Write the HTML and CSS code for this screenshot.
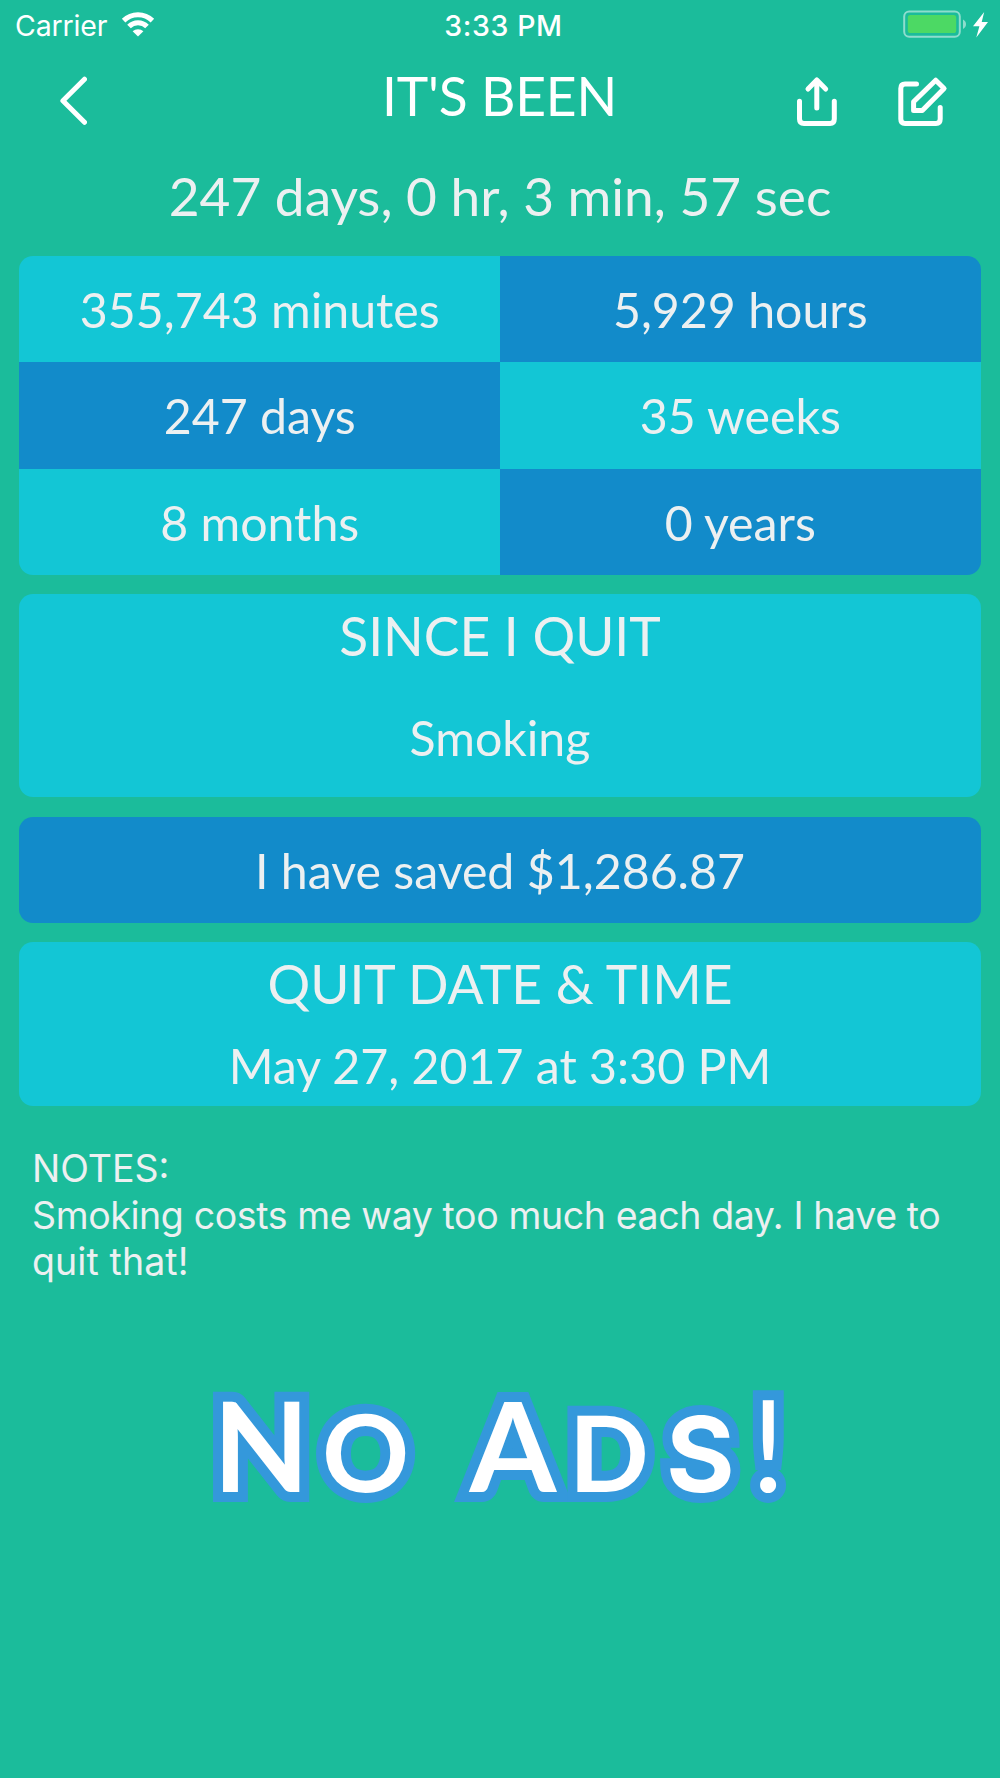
FILE: index.html
```html
<!DOCTYPE html>
<html lang="en">

<head>
    <meta charset="utf-8">
    <title>It's Been</title>
    <link rel="stylesheet" href="styles.css">
</head>

<body>

    <div class="status-bar">
        <div class="carrier">
            <span>Carrier</span>
            <svg class="wifi" width="34" height="25" viewBox="121 12 34 25">
                <path class="wifi-arc" d="M123.6 20.6a20.5 20.5 0 0 1 28.8 0M129 26.6a12.6 12.6 0 0 1 18 0" />
                <path fill="#fff" d="M132.6 31.3a7.8 7.8 0 0 1 10.8 0L138 36.5z" />
            </svg>
        </div>
        <div class="clock">3:33 PM</div>
        <svg class="battery" width="86" height="28" viewBox="903 10 86 28">
            <rect x="904.2" y="11.6" width="55.6" height="25.2" rx="5" fill="none" stroke="#8eddcd" stroke-width="2" />
            <rect x="907.8" y="15" width="48.4" height="18" rx="2.6" fill="#4cd964" />
            <path d="M963 19.5c4 2 4 7.5 0 9.5z" fill="#8eddcd" />
            <path d="M984.2 12L973 26.3h6.4L976.3 37.5 988 22h-6.3z" fill="#fff" />
        </svg>
    </div>

    <div class="nav">
        <svg class="icon" width="27" height="50" viewBox="60 76 27 50">
            <path d="M84.5 79.2L62.9 100.7 84.5 122.3" />
        </svg>
        <h1>IT'S BEEN</h1>
        <div class="actions">
            <svg class="icon" width="41" height="50" viewBox="797 76 41 50">
                <path d="M816.8 80v28M808 89l8.8-9 8.9 9M799.5 101.3V119q0 4.5 4.5 4.5h26q4.3 0 4.3-4.5v-17.7" />
            </svg>
            <svg class="icon" width="50" height="50" viewBox="898 76 50 50">
                <path d="M916.5 84H905q-4.2 0-4.2 4.5V119q0 4.5 4.2 4.5h31q4.200 0 4.200-4.500v-11.500" />
                <path d="M935.7 80.2l8.4 8.3-21.8 21.9h-8.7v-8.7z" />
            </svg>
        </div>
    </div>

    <div class="elapsed">247 days, 0 hr, 3 min, 57 sec</div>

    <div class="cards">
        <div class="units">
            <div class="cyan">355,743 minutes</div>
            <div class="blue">5,929 hours</div>
            <div class="blue">247 days</div>
            <div class="cyan">35 weeks</div>
            <div class="cyan">8 months</div>
            <div class="blue">0 years</div>
        </div>

        <div class="card habit cyan">
            <h2>SINCE I QUIT</h2>
            <p>Smoking</p>
        </div>

        <div class="card saved blue">
            <p>I have saved $1,286.87</p>
        </div>

        <div class="card date cyan">
            <h2>QUIT DATE &amp; TIME</h2>
            <p>May 27, 2017 at 3:30 PM</p>
        </div>
    </div>

    <div class="notes">
        NOTES:<br>
        <span class="tight">Smoking costs me way too much each day. I have to</span><br>
        <span class="loose">quit that!</span>
    </div>

    <svg class="no-ads" width="600" height="150" viewBox="200 1370 600 150">
        <text y="1492"><tspan x="213">N</tspan><tspan class="small-o" x="322">O</tspan> <tspan x="469.5">A</tspan><tspan class="small-d" x="569">D</tspan><tspan class="small-s" x="666">S</tspan><tspan class="mark" x="768.3">!</tspan></text>
    </svg>

</body>

</html>
```

FILE: styles.css
```css
* {
    box-sizing: border-box;
}

body {
    margin: 0;
    height: 1778px;
    overflow: hidden;
    background: #1bbc9b;
    color: #ecf0f1;
    font-family: Lato, sans-serif;
    font-size: 48.25px;
}

h1, h2, p {
    margin: 0;
    font-weight: 400;
}

svg {
    display: block;
}

/* status bar */
.status-bar {
    display: grid;
    grid-template-columns: 1fr auto 1fr;
    height: 50px;
    padding: 0 11px 0 15px;
    color: #fff;
    font-family: Inter, sans-serif;
    font-size: 28.5px;
    line-height: 51px;
}

.carrier {
    display: flex;
    gap: 14px;
    letter-spacing: -0.15px;
}

.wifi {
    margin-top: 12px;
}

.wifi-arc {
    fill: none;
    stroke: #fff;
    stroke-width: 5;
}

.clock {
    padding-left: 3px;
    font-weight: 500;
    letter-spacing: 0.6px;
}

.battery {
    margin-top: 10px;
    justify-self: end;
}

/* title row */
.nav {
    display: grid;
    grid-template-columns: 1fr auto 1fr;
    height: 113px;
    padding: 13px 52px 0 60px;
    color: #fff;
}

.nav .icon {
    margin-top: 13px;
}

.nav h1 {
    padding-right: 9px;
    font-size: 53.33px;
    line-height: 65px;
    letter-spacing: -0.2px;
}

.actions {
    display: flex;
    gap: 60px;
    justify-self: end;
}

.icon {
    fill: none;
    stroke: #fff;
    stroke-width: 5;
    stroke-linecap: round;
    stroke-linejoin: round;
}

.elapsed {
    height: 93px;
    font-size: 53.2px;
    line-height: 65px;
    text-align: center;
}

/* cards */
.cards {
    display: flex;
    flex-direction: column;
    gap: 19.33px;
    padding: 0 19.4px;
    text-align: center;
}

.cyan {
    background: #13c6d5;
}

.blue {
    background: #128bca;
}

.units {
    display: grid;
    grid-template-columns: 1fr 1fr;
    grid-auto-rows: 106.33px;
    border-radius: 14px;
    overflow: hidden;
    line-height: 107px;
}

.card {
    border-radius: 14px;
}

.card h2 {
    font-size: 53.33px;
    line-height: 64px;
}

.habit {
    height: 203px;
    padding-top: 9px;
}

.habit p {
    padding-top: 24px;
    line-height: 93px;
}

.saved {
    height: 106.33px;
    line-height: 106.33px;
}

.date {
    height: 164px;
    padding-top: 9px;
}

.date p {
    padding-top: 5px;
    line-height: 90px;
}

/* notes */
.notes {
    padding: 40px 32px 0;
    font-family: Inter, sans-serif;
    font-size: 37.5px;
    line-height: 46.4px;
    white-space: nowrap;
}

.tight {
    letter-spacing: -0.39px;
}

.loose {
    letter-spacing: 0.1px;
}

.no-ads {
    margin: 84px auto 0;
}

.no-ads text {
    font-size: 125px;
    font-weight: 700;
    fill: #fff;
    stroke: #3498db;
    stroke-width: 20px;
    stroke-miterlimit: 2.6;
    paint-order: stroke;
}

.no-ads .small-d {
    font-size: 105px;
}

.no-ads .small-o {
    font-size: 108px;
}

.no-ads .small-s {
    font-family: Inter, sans-serif;
    font-size: 105px;
}

.no-ads .mark {
    font-size: 128px;
    font-weight: 400;
    text-anchor: middle;
}
```
